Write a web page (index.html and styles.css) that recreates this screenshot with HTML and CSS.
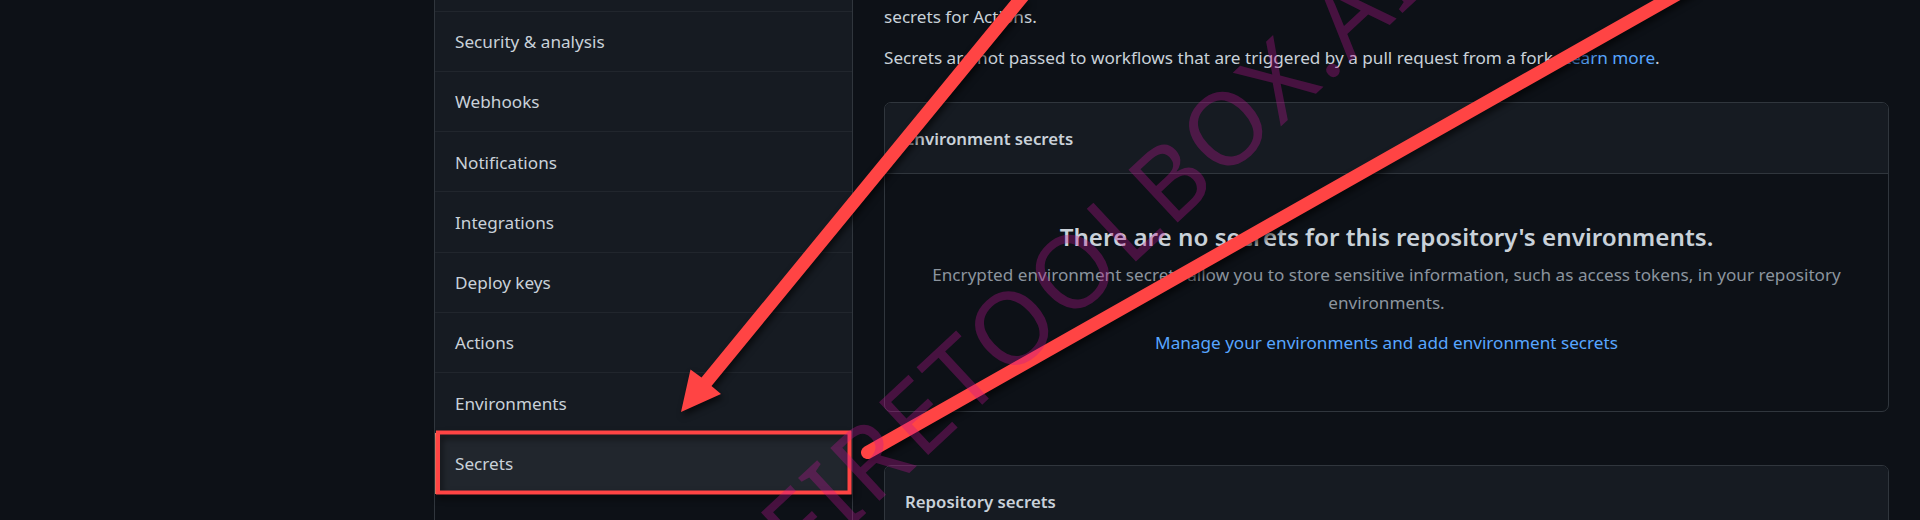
FILE: index.html
```html
<!DOCTYPE html>
<html lang="en">
<head>
<meta charset="utf-8">
<title>Secrets</title>
<link rel="stylesheet" href="styles.css">
</head>
<body>
<div class="page">
  <nav class="menu">
    <a class="item first"></a>
    <a class="item">Security &amp; analysis</a>
    <a class="item">Webhooks</a>
    <a class="item">Notifications</a>
    <a class="item">Integrations</a>
    <a class="item">Deploy keys</a>
    <a class="item">Actions</a>
    <a class="item">Environments</a>
    <a class="item selected">Secrets</a>
  </nav>
  <main class="content">
    <p class="intro">secrets for Actions.</p>
    <p class="intro">Secrets are not passed to workflows that are triggered by a pull request from a fork. <a class="link">Learn more</a>.</p>
    <section class="card">
      <header class="card-head">Environment secrets</header>
      <div class="blank">
        <h3 class="blank-title">There are no secrets for this repository's environments.</h3>
        <p class="blank-text">Encrypted environment secrets allow you to store sensitive information, such as access tokens, in your repository<br>environments.</p>
        <a class="link">Manage your environments and add environment secrets</a>
      </div>
    </section>
    <section class="card">
      <header class="card-head">Repository secrets</header>
      <div class="blank"></div>
    </section>
  </main>
</div>
<svg class="overlay" width="1920" height="520" viewBox="0 0 1920 520">
  <g class="marks">
    <path class="fill" d="M1012 -1 L701.500 377.500 L690.500 369.500 L681 412 L721 394 L711.500 386 L1029 -1 Z"/>
    <path class="line" d="M867.500 452.500 L1690 -13"/>
    <rect class="frame" x="438" y="432.500" width="411.500" height="60"/>
  </g>
  <text class="watermark" transform="translate(803 572) rotate(-43)" x="0" y="0">FIRETOOLBOX.AI</text>
</svg>
</body>
</html>
```
FILE: styles.css
```css
* { box-sizing: border-box; }
body {
  margin: 0;
  height: 520px;
  overflow: hidden;
  background: #0d1117;
  color: #c9d1d9;
  font-family: "Noto Sans", "Open Sans", sans-serif;
  font-size: 17.15px;
}
.page { display: flex; height: 520px; overflow: hidden; }
.menu {
  width: 419px;
  height: 540px;
  margin-left: 434px;
  border: solid #30363d;
  border-width: 0 1px;
  flex: none;
}
.item {
  display: flex;
  align-items: center;
  height: 60.25px;
  padding: 1px 0 0 20px;
  background: #161b22;
  border-bottom: 1px solid #21262d;
}
.item.first { height: 11.5px; }
.item.selected { background: #21262d; border-bottom: 0; box-shadow: inset 2px 0 #f78166; }
.content { width: 1005px; margin-left: 31px; flex: none; }
.intro { margin: 0; line-height: 27px; white-space: nowrap; }
.intro:first-child { margin: 3px 0 14px; }
.link { color: #58a6ff; }
.card { border: 1px solid #30363d; border-radius: 7px; overflow: hidden; margin: 31px 0 53px; height: 310px; }
.card-head {
  height: 71px;
  padding-left: 20px;
  line-height: 72px;
  background: #161b22;
  border-bottom: 1px solid #30363d;
  font-size: 16.8px;
  font-weight: 600;
}
.blank { text-align: center; padding-top: 44px; white-space: nowrap; }
.blank-title { margin: 0; font-size: 24.2px; line-height: 37px; font-weight: 600; }
.blank-text { margin: 6px 0 15px; color: #8b949e; line-height: 27.5px; }
.overlay { position: absolute; left: 0; top: 0; }
.marks { filter: drop-shadow(2px 4px 3px rgba(0, 0, 0, 0.6)); }
.fill { fill: #ff4444; }
.line { stroke: #ff4444; stroke-width: 13; stroke-linecap: round; }
.frame { fill: none; stroke: #ff4444; stroke-width: 4; }
.watermark {
  font-family: "Noto Sans", sans-serif;
  font-size: 101px;
  font-weight: 400;
  letter-spacing: 4px;
  fill: #be1496;
  fill-opacity: 0.33;
}
```
